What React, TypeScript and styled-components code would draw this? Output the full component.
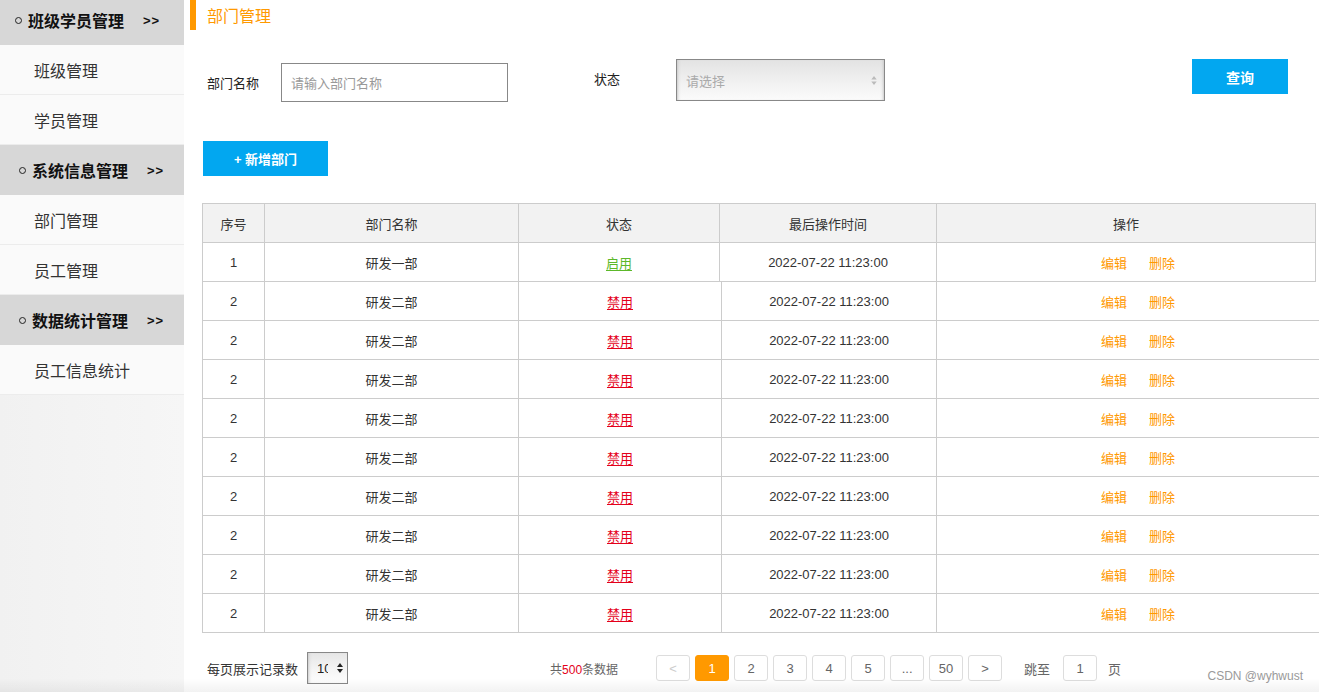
import styled, { createGlobalStyle } from "styled-components";

const GlobalStyle = createGlobalStyle`
  html, body {
    margin: 0;
    padding: 0;
    background: #fff;
    overflow: hidden;
  }
  body {
    font-family: "Liberation Sans", "Noto Sans CJK SC", sans-serif;
    color: #333;
  }
`;

const Page = styled.div`
  display: flex;
  margin-top: -5px;
  min-height: 697px;
  position: relative;
`;

/* ---------- sidebar ---------- */

const Sidebar = styled.nav`
  width: 184px;
  flex-shrink: 0;
  background: linear-gradient(to right, #f1f1f1, #f6f6f6);
  min-height: 697px;
`;

const GroupHead = styled.div<{ $pad: number }>`
  height: 50px;
  display: flex;
  align-items: center;
  padding-left: ${(p) => p.$pad}px;
  background: #d7d7d7;
  font-size: 16px;
  font-weight: bold;
  color: #111;
`;

const Bullet = styled.span`
  width: 5px;
  height: 5px;
  border: 1.3px solid #222;
  border-radius: 50%;
  margin-right: 6px;
`;

const Chevrons = styled.span`
  margin-left: 19px;
  font-size: 13px;
  font-weight: bold;
  letter-spacing: 1px;
`;

const NavItem = styled.div`
  height: 49px;
  display: flex;
  align-items: center;
  padding-left: 34px;
  background: #fafafa;
  border-bottom: 1px solid #ececec;
  font-size: 16px;
  color: #333;
`;

/* ---------- main ---------- */

const Main = styled.main`
  flex: 1;
  display: flex;
  flex-direction: column;
`;

const Title = styled.h1`
  margin: 0 0 0 6px;
  height: 35px;
  box-sizing: border-box;
  padding: 10px 0 0 11px;
  border-left: 6px solid #ff9900;
  font-size: 16px;
  line-height: 24px;
  font-weight: normal;
  color: #ff9900;
`;

const SearchRow = styled.div`
  display: flex;
  align-items: flex-start;
  margin-top: 29px;
  height: 43px;
  padding: 0 31px 0 23px;
`;

const FieldLabel = styled.label<{ $gap: number; $top: number }>`
  font-size: 13px;
  line-height: 19px;
  color: #222;
  margin-right: ${(p) => p.$gap}px;
  margin-top: ${(p) => p.$top}px;
`;

const TextInput = styled.div`
  width: 227px;
  height: 39px;
  margin-top: 4px;
  border: 1px solid #888;
  display: flex;
  align-items: center;
  padding-left: 9px;
  box-sizing: border-box;
  font-size: 13px;
  color: #999;
`;

const SelectBox = styled.div`
  width: 209px;
  height: 42px;
  box-sizing: border-box;
  border: 1px solid #888;
  background: linear-gradient(to bottom, #e3e3e3, #f2f2f2 60%, #fbfbfb);
  box-shadow: inset 3px 0 3px -2px #c8c8c8, inset -3px 0 3px -2px #c8c8c8;
  display: flex;
  align-items: center;
  justify-content: space-between;
  padding: 0 7px 0 9px;
  font-size: 13px;
  color: #aaa;
`;

const Spacer = styled.div<{ $w: number }>`
  width: ${(p) => p.$w}px;
  flex-shrink: 0;
`;

const BlueButton = styled.button<{ $w: number }>`
  width: ${(p) => p.$w}px;
  height: 35px;
  border: none;
  background: #02a7f0;
  color: #fff;
  font-family: inherit;
  font-size: 13px;
  font-weight: bold;
  cursor: pointer;
  padding: 0;
`;

const QueryButton = styled(BlueButton)`
  margin-left: auto;
  font-size: 14px;
`;

const AddRow = styled.div`
  margin: 39px 0 0 19px;
`;

/* ---------- table ---------- */

const Table = styled.div`
  margin: 27px 0 0 18px;
  display: flex;
  flex-direction: column;
`;

const Row = styled.div<{ $head?: boolean; $wide?: boolean }>`
  display: grid;
  grid-template-columns: ${(p) =>
    p.$wide ? "62px 254px 203px 215px 383px" : "62px 254px 201px 217px 379px"};
  width: ${(p) => (p.$wide ? "1117px" : "1114px")};
  height: ${(p) => (p.$head ? 40 : 39)}px;
  box-sizing: border-box;
  border-bottom: 1px solid #ccc;
  border-right: ${(p) => (p.$wide ? "none" : "1px solid #ccc")};
  border-top: ${(p) => (p.$head ? "1px solid #ccc" : "none")};
  background: ${(p) => (p.$head ? "#f2f2f2" : "#fff")};
`;

const Cell = styled.div<{ $padLeft?: number }>`
  display: flex;
  align-items: center;
  justify-content: center;
  border-left: 1px solid #ccc;
  font-size: 13px;
  color: #333;
  padding-left: ${(p) => p.$padLeft ?? 0}px;
  gap: 22px;
`;

const Status = styled.span<{ $on: boolean }>`
  color: ${(p) => (p.$on ? "#5cb82a" : "#e4001a")};
  text-decoration: underline;
  text-underline-offset: 2px;
`;

const Action = styled.span`
  color: #ff9900;
  cursor: pointer;
`;

/* ---------- footer ---------- */

const Footer = styled.div`
  display: flex;
  align-items: center;
  margin: 19px 0 0 23px;
  height: 32px;
  font-size: 13px;
`;

const PageSize = styled.div`
  width: 41px;
  height: 32px;
  box-sizing: border-box;
  margin-left: 9px;
  border: 1px solid #888;
  background: linear-gradient(to bottom, #e6e6e6, #f6f6f6 60%, #fdfdfd);
  box-shadow: inset 3px 0 3px -2px #c8c8c8;
  display: flex;
  align-items: center;
  padding-left: 9px;
  color: #222;
`;

const Clip = styled.span`
  width: 11px;
  overflow: hidden;
  white-space: nowrap;
  margin-right: 9px;
`;

const Total = styled.span`
  margin-left: 202px;
  font-size: 12px;
  color: #666;
  em {
    font-style: normal;
    color: #e4001a;
  }
`;

const Pager = styled.div`
  display: flex;
  gap: 5px;
  margin-left: 38px;
`;

const PageBtn = styled.span<{ $active?: boolean; $disabled?: boolean }>`
  width: 34px;
  height: 26px;
  box-sizing: border-box;
  border: 1px solid ${(p) => (p.$active ? "#ff9900" : "#ddd")};
  border-radius: 3px;
  background: ${(p) => (p.$active ? "#ff9900" : "#fff")};
  color: ${(p) => (p.$active ? "#fff" : p.$disabled ? "#ccc" : "#666")};
  font-size: 13px;
  display: flex;
  align-items: center;
  justify-content: center;
`;

const Jump = styled.span<{ $gap: number }>`
  margin-left: ${(p) => p.$gap}px;
  color: #666;
`;

const JumpInput = styled(PageBtn)`
  margin-left: 13px;
  margin-right: 11px;
`;

const Watermark = styled.span`
  position: absolute;
  right: 16px;
  bottom: 9px;
  font-size: 12px;
  color: #9a9a9a;
`;

const BottomShade = styled.div`
  position: absolute;
  left: 0;
  right: 0;
  bottom: 0;
  height: 14px;
  background: linear-gradient(to bottom, rgba(0, 0, 0, 0), rgba(0, 0, 0, 0.05));
  pointer-events: none;
`;

const Updown = ({ h }: { h: number }) => (
  <svg width="6" height={h} viewBox="0 0 6 10">
    <path d="M3 0 L6 4 H0 Z M3 10 L6 6 H0 Z" fill="currentColor" />
  </svg>
);

const nav = [
  { title: "班级学员管理", pad: 15, items: ["班级管理", "学员管理"] },
  { title: "系统信息管理", pad: 19, items: ["部门管理", "员工管理"] },
  { title: "数据统计管理", pad: 19, items: ["员工信息统计"] },
];

const rows = [
  { no: 1, name: "研发一部", on: true },
  ...Array.from({ length: 9 }, () => ({ no: 2, name: "研发二部", on: false })),
];

export default function App() {
  return (
    <>
      <GlobalStyle />
      <Page>
        <Sidebar>
          {nav.map((g) => (
            <div key={g.title}>
              <GroupHead $pad={g.pad}>
                <Bullet />
                {g.title}
                <Chevrons>&gt;&gt;</Chevrons>
              </GroupHead>
              {g.items.map((i) => (
                <NavItem key={i}>{i}</NavItem>
              ))}
            </div>
          ))}
        </Sidebar>

        <Main>
          <Title>部门管理</Title>

          <SearchRow>
            <FieldLabel $gap={22} $top={15}>部门名称</FieldLabel>
            <TextInput>请输入部门名称</TextInput>
            <Spacer $w={86} />
            <FieldLabel $gap={56} $top={11}>状态</FieldLabel>
            <SelectBox>
              请选择
              <span style={{ color: "#bbb" }}>
                <Updown h={9} />
              </span>
            </SelectBox>
            <QueryButton $w={96}>查询</QueryButton>
          </SearchRow>

          <AddRow>
            <BlueButton $w={125}>+ 新增部门</BlueButton>
          </AddRow>

          <Table>
            <Row $head>
              <Cell>序号</Cell>
              <Cell>部门名称</Cell>
              <Cell>状态</Cell>
              <Cell>最后操作时间</Cell>
              <Cell>操作</Cell>
            </Row>
            {rows.map((r, idx) => (
              <Row key={idx} $wide={idx > 0}>
                <Cell>{r.no}</Cell>
                <Cell>{r.name}</Cell>
                <Cell>
                  <Status $on={r.on}>{r.on ? "启用" : "禁用"}</Status>
                </Cell>
                <Cell>2022-07-22 11:23:00</Cell>
                <Cell $padLeft={idx > 0 ? 20 : 24}>
                  <Action>编辑</Action>
                  <Action>删除</Action>
                </Cell>
              </Row>
            ))}
          </Table>

          <Footer>
            每页展示记录数
            <PageSize>
              <Clip>10</Clip>
              <Updown h={10} />
            </PageSize>
            <Total>
              共<em>500</em>条数据
            </Total>
            <Pager>
              <PageBtn $disabled>&lt;</PageBtn>
              <PageBtn $active>1</PageBtn>
              <PageBtn>2</PageBtn>
              <PageBtn>3</PageBtn>
              <PageBtn>4</PageBtn>
              <PageBtn>5</PageBtn>
              <PageBtn>...</PageBtn>
              <PageBtn>50</PageBtn>
              <PageBtn>&gt;</PageBtn>
            </Pager>
            <Jump $gap={22}>跳至</Jump>
            <JumpInput>1</JumpInput>
            <Jump $gap={0}>页</Jump>
          </Footer>
        </Main>

        <Watermark>CSDN @wyhwust</Watermark>
        <BottomShade />
      </Page>
    </>
  );
}
